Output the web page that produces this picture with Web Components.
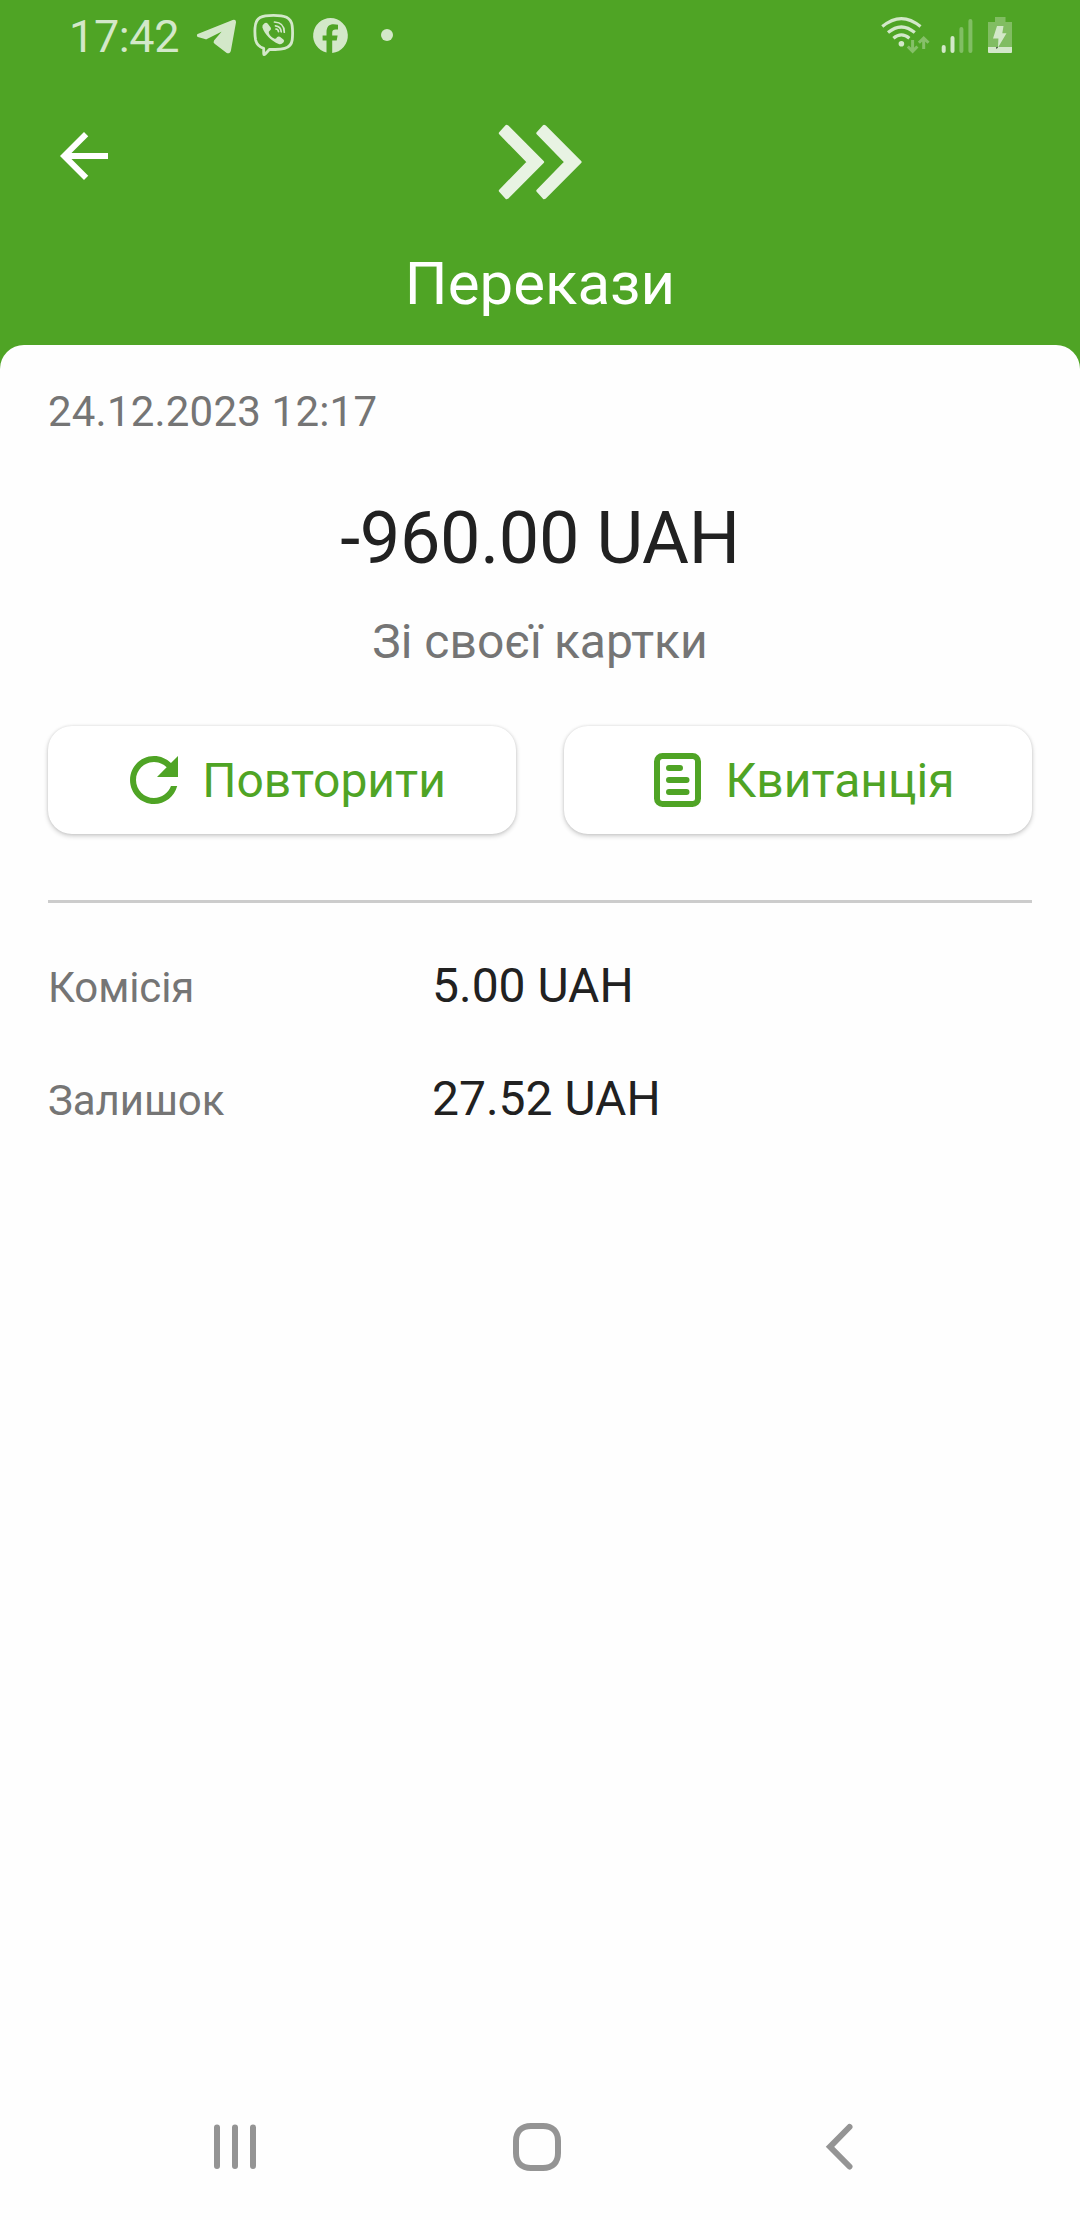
<!DOCTYPE html>
<html lang="uk">
<head>
<meta charset="utf-8">
<title>Перекази</title>
<style>
html,body{margin:0;padding:0}
body{width:1080px;height:2220px;overflow:hidden;background:#fefefe;font-family:Roboto,sans-serif}
</style>
</head>
<body>
<transfer-screen></transfer-screen>
<script>
const ICONS = {
  telegram: ['194 12 44 48', `<path fill="currentColor" stroke="currentColor" stroke-width="2" stroke-linejoin="round" d="M198 35Q197.600 36 199 36.400L206 38.400L223 29.800Q224.600 29.600 223.600 31L214.800 41.200Q214.200 42.300 215.200 43L227 52Q229 53 229.800 51L235 22.200Q235 20.200 233 21Z"/>`],
  viber: ['252 12 46 48', `<g fill="none" stroke="currentColor" stroke-linecap="round" stroke-linejoin="round"><path stroke-width="2.800" d="M273.500 15.300C262 15.300 255.500 17 255 28Q254.600 34 255.600 40Q257.200 46.500 263.700 48.400V53.500Q263.700 55.600 265.200 54L269.600 49.300C281 50 291 49.400 292.200 40Q293 33 292.200 26C291 17 284.500 15.300 273.500 15.300Z"/><path stroke-width="1.700" d="M274.500 22Q284.300 22.600 284.300 32.200M275.500 25.800Q280.800 26.300 281.200 31.800M276 29Q278.200 29.200 278.500 31.700"/></g><path fill="currentColor" d="M264.500 23.200Q266.500 22 268 24L270.800 27.700Q271.600 29.200 270 30.600Q268.400 31.600 268.800 33Q270.400 37.200 274.600 38.700Q276 39 277 37.200Q278.200 35.800 279.900 36.800L283.400 39.400Q284.800 40.600 283.600 42.200Q281.300 45 278.700 44C271 40.600 265 34.600 262.400 27.400Q261.800 25 264.500 23.200Z"/>`],
  facebook: ['311 12 40 48', `<path fill="currentColor" d="M330.500 18A17.500 17.500 0 0 0 326.500 52.500V40.600H322.600V35.500H326.500V32.600C326.500 26.500 329.200 24.300 333.600 24.300Q336 24.300 338 24.800V29.600H335.800C333.200 29.600 332.200 30.600 332.200 33V35.500H337.600L336.700 40.600H332.200V52.900A17.500 17.500 0 0 0 330.500 18Z"/>`],
  dot: ['379 12 16 48', `<circle cx="387" cy="35" r="6" fill="currentColor"/>`],
  wifi: ['880 12 52 48', `<g fill="none" stroke="currentColor" stroke-width="3.200"><path d="M882.300 26.600Q901.400 10.600 920.500 26.600"/><path d="M888 32.600Q901.400 21.400 914.800 32.600"/><path d="M893.400 38.300Q901.400 31.600 909.400 38.300"/></g><circle cx="901.400" cy="43.700" r="2.800" fill="currentColor"/><g fill="none" stroke="currentColor" stroke-width="3" opacity=".42"><path d="M912.600 40V51M907.800 46.500L912.600 51.300L917.400 46.500M923.700 49V38.500M918.900 42.800L923.700 38L928.500 42.800"/></g>`],
  signal: ['941 12 32 48', `<g fill="currentColor"><rect x="941.700" y="45" width="4" height="8" rx="2"/><rect x="950.500" y="36" width="4" height="17" rx="2"/><g opacity=".38"><rect x="959.400" y="27" width="4" height="26" rx="2"/><rect x="968.400" y="19" width="4" height="34" rx="2"/></g></g>`],
  battery: ['987 12 26 48', `<g fill="currentColor"><path opacity=".38" d="M995 17H1005.500V22H1012V47H988V22H995Z"/><path d="M988 47H1012V52Q1012 53 1011 53H989Q988 53 988 52Z"/><path d="M997 26H1003.500L1002.300 33.200H1006.500L998 47.500L998.400 38.500H993Z"/></g><path d="M996 47.500L998 46.800L996.800 49Z" fill="#0b1b05"/>`],
  arrow: ['0 0 24 24', `<path fill="currentColor" d="M20 11H7.830l5.590-5.590L12 4l-8 8 8 8 1.410-1.410L7.830 13H20z"/>`],
  chevrons: ['498 124 84 76', `<g fill="currentColor" stroke="currentColor" stroke-width="3" stroke-linejoin="round"><path d="M500.300 133.300L506.600 126.300L507.300 126.600L542.600 162L507.300 197.400L506.600 197.700L500.300 190.700L528.300 162Z"/><path d="M537.800 133.300L544.100 126.300L544.800 126.600L580.100 162L544.800 197.400L544.100 197.700L537.800 190.700L565.800 162Z"/></g>`],
  repeat: ['0 0 24 24', `<path fill="currentColor" d="M17.650 6.350C16.200 4.900 14.210 4 12 4c-4.420 0-7.990 3.580-7.990 8s3.570 8 7.990 8c3.730 0 6.840-2.550 7.730-6h-2.080c-.82 2.330-3.040 4-5.650 4-3.310 0-6-2.690-6-6s2.690-6 6-6c1.660 0 3.140.69 4.220 1.780L13 11h7V4l-2.350 2.350z"/>`],
  receipt: ['0 0 72 72', `<g fill="none" stroke="currentColor" stroke-width="6"><rect x="15" y="12" width="41" height="48" rx="5.500"/><path stroke-linecap="round" d="M27 24H38M27 36H44.500M27 48H44.500"/></g>`],
  recents: ['0 0 48 48', `<path fill="none" stroke="currentColor" stroke-width="6" stroke-linecap="round" d="M6 4.500V43M24 4.500V43M42 4.500V43"/>`],
  home: ['0 0 48 48', `<path fill="none" stroke="currentColor" stroke-width="6" d="M18 3H30C39.500 3 45 8.500 45 18V30C45 39.500 39.500 45 30 45H18C8.500 45 3 39.500 3 30V18C3 8.500 8.500 3 18 3Z"/>`],
  back: ['0 0 48 48', `<path fill="none" stroke="currentColor" stroke-width="6" stroke-linecap="round" d="M34.500 4L15 23.800L34.500 43.500"/>`]
};

function define(tag, html) {
  const t = document.createElement('template');
  t.innerHTML = html;
  customElements.define(tag, class extends HTMLElement {
    constructor() {
      super();
      this.attachShadow({ mode: 'open' }).append(t.content.cloneNode(true));
    }
  });
}

customElements.define('ui-icon', class extends HTMLElement {
  connectedCallback() {
    const [box, body] = ICONS[this.getAttribute('name')];
    const [, , bw, bh] = box.split(' ').map(Number);
    const w = this.getAttribute('size') || bw, h = this.getAttribute('size') || bh;
    const root = this.shadowRoot || this.attachShadow({ mode: 'open' });
    root.innerHTML = `<style>:host{display:block;flex:none}svg{display:block}</style>
      <svg width="${w}" height="${h}" viewBox="${box}" aria-hidden="true">${body}</svg>`;
  }
});

define('status-bar', `<style>
  :host{display:flex;justify-content:space-between;height:72px;padding:0 67px 0 69px;color:#d3e8c9;box-sizing:border-box}
  div{display:flex;padding-top:12px}
  .time{font-size:45px;line-height:50px;width:125px;white-space:nowrap;letter-spacing:-.4px}
  .viber{margin-left:14px}.fb{margin-left:13px}.dot{margin-left:28px}
  .signal{margin-left:9px}.battery{margin-left:14px}
</style>
<div><span class="time">17:42</span><ui-icon name="telegram"></ui-icon><ui-icon class="viber" name="viber"></ui-icon><ui-icon class="fb" name="facebook"></ui-icon><ui-icon class="dot" name="dot"></ui-icon></div>
<div><ui-icon name="wifi"></ui-icon><ui-icon class="signal" name="signal"></ui-icon><ui-icon class="battery" name="battery"></ui-icon></div>`);

define('app-header', `<style>
  :host{display:block;height:297px;color:#fff}
  .bar{display:grid;grid-template-columns:1fr auto 1fr;height:168px;padding:48px 48px 0;box-sizing:border-box}
  .logo{padding-top:4px;color:#e8f3e3}
  h1{margin:8px 0 0;font-size:60px;line-height:72px;font-weight:400;text-align:center}
</style>
<div class="bar"><ui-icon name="arrow" size="72"></ui-icon><ui-icon class="logo" name="chevrons"></ui-icon></div>
<h1><slot></slot></h1>`);

define('action-button', `<style>
  :host{display:flex;flex:1;height:108px;align-items:center;justify-content:center;gap:12px;border-radius:24px;
    background:#fff;color:#4fa425;font-size:48px;line-height:56px;box-shadow:0 2px 5px rgba(0,0,0,.2),0 0 3px rgba(0,0,0,.1)}
  span{padding-top:2px}
</style><slot name="icon"></slot><span><slot></slot></span>`);

define('detail-row', `<style>
  :host{display:flex;align-items:baseline;height:56px;line-height:56px}
  .label{width:384px;font-size:42px;color:#757575;letter-spacing:-.1px}
  .value{font-size:48px;color:#212121}
</style><span class="label"><slot name="label"></slot></span><span class="value"><slot></slot></span>`);

define('nav-bar', `<style>
  :host{display:flex;height:144px;align-items:center;color:#949494;padding:0 0 2px 211px;box-sizing:border-box;gap:254px}
</style><ui-icon name="recents"></ui-icon><ui-icon name="home"></ui-icon><ui-icon name="back"></ui-icon>`);

define('transfer-screen', `<style>
  :host{display:flex;flex-direction:column;width:1080px;height:2220px;background:#4fa425}
  main{flex:1;display:flex;flex-direction:column;background:#fefefe;border-radius:24px 24px 0 0;margin-top:-24px;box-sizing:border-box;padding:42px 48px 0}
  app-header{height:297px}
  .date{font-size:42px;line-height:50px;color:#757575;letter-spacing:.2px}
  .amount{margin-top:60px;font-size:72px;line-height:84px;color:#212121;text-align:center;letter-spacing:-.35px}
  .source{margin-top:33px;font-size:48px;line-height:56px;color:#757575;text-align:center}
  .actions{display:flex;gap:48px;margin-top:56px}
  hr{width:100%;height:3px;border:0;margin:66px 0 0;background:#ccc}
  .details{display:flex;flex-direction:column;gap:57px;margin-top:55px}
  nav-bar{background:#fefefe}
</style>
<status-bar></status-bar>
<app-header>Перекази</app-header>
<main>
  <div class="date">24.12.2023 12:17</div>
  <div class="amount">-960.00 UAH</div>
  <div class="source">Зі своєї картки</div>
  <div class="actions">
    <action-button><ui-icon slot="icon" name="repeat" size="72"></ui-icon>Повторити</action-button>
    <action-button><ui-icon slot="icon" name="receipt"></ui-icon>Квитанція</action-button>
  </div>
  <hr>
  <div class="details">
    <detail-row><span slot="label">Комісія</span>5.00 UAH</detail-row>
    <detail-row><span slot="label">Залишок</span>27.52 UAH</detail-row>
  </div>
</main>
<nav-bar></nav-bar>`);
</script>
</body>
</html>
